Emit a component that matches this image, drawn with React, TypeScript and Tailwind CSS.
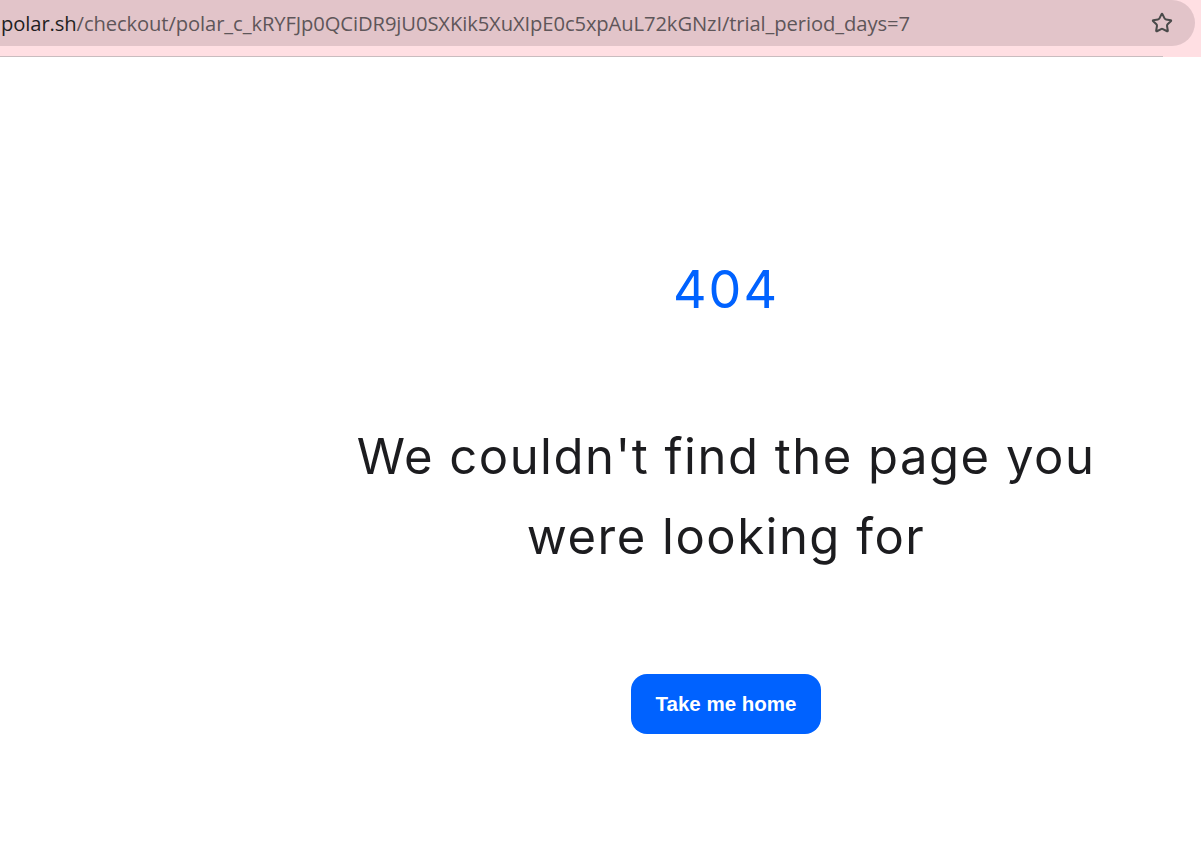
import { Star } from "lucide-react";

export default function App() {
  return (
    <div className="w-[1201px] h-[863px] bg-white overflow-hidden flex flex-col">
      {/* browser chrome */}
      <div className="bg-[#ffdfe3] h-[57px] flex flex-col shrink-0">
        <div className="h-[46px] w-[1195px] bg-[#e2c4c9] rounded-r-[23px] flex items-center justify-between pl-[1px] pr-[22px]">
          <div className="text-[20.2px] tracking-[-0.1px] font-['Open_Sans',sans-serif] text-[#5e5659] whitespace-nowrap">
            <span className="text-[#1f1f1f]">polar.sh</span>/checkout/polar_c_kRYFJp0QCiDR9jU0SXKik5XuXIpE0c5xpAuL72kGNzI/trial_period_days=7
          </div>
          <Star className="w-[22px] h-[22px] text-[#4a4a4a]" strokeWidth={2.2} />
        </div>
        <div className="flex-1" />
        <div className="h-px w-[1163px] bg-[#c9bcbf]" />
      </div>

      {/* page */}
      <div className="flex flex-1">
        <div className="w-[251px] shrink-0" />
        <div className="flex-1 flex flex-col items-center font-['Inter',sans-serif]">
          <h1 className="mt-[201px] text-[52px] leading-[64px] tracking-[2px] text-[#0062ff] font-normal">404</h1>
          <p className="mt-[95px] text-[49px] leading-[80px] text-[#1c1c1f] text-center tracking-[1.5px] w-[800px]">
            We couldn't find the page you were looking for
          </p>
          <button className="mt-[97px] w-[190px] h-[60px] rounded-2xl bg-[#0062ff] text-white text-[20.5px] font-semibold font-['Liberation_Sans',sans-serif]">
            Take me home
          </button>
        </div>
      </div>
    </div>
  );
}
